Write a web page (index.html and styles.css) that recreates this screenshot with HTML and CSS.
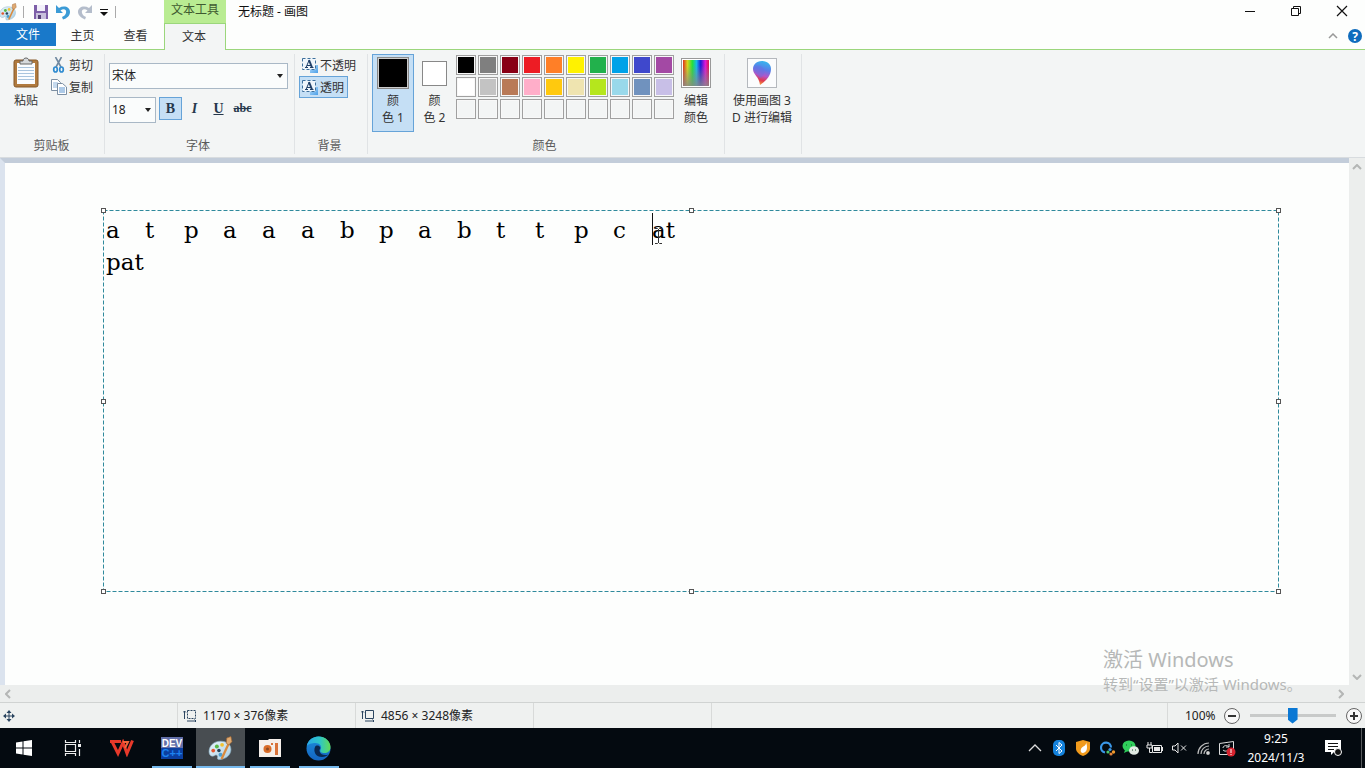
FILE: index.html
```html
<!DOCTYPE html>
<html lang="zh-CN">
<head>
<meta charset="utf-8">
<title>无标题 - 画图</title>
<link rel="stylesheet" href="styles.css">
</head>
<body>
<svg class="defs" aria-hidden="true">
  <defs>
    <linearGradient id="palBody" x1="0" y1="0" x2="1" y2="1"><stop offset="0" stop-color="#e8f4fa"/><stop offset="1" stop-color="#a9cfe4"/></linearGradient>
    <linearGradient id="blueSq" x1="0" y1="0" x2="1" y2="1"><stop offset="0" stop-color="#b5dcfb"/><stop offset="1" stop-color="#4a9fe8"/></linearGradient>
    <linearGradient id="rainbow"><stop offset="0" stop-color="#e0301e"/><stop offset=".17" stop-color="#d8d31c"/><stop offset=".36" stop-color="#23e03c"/><stop offset=".52" stop-color="#16b8e8"/><stop offset=".68" stop-color="#2018d8"/><stop offset=".86" stop-color="#e017d8"/><stop offset="1" stop-color="#d81848"/></linearGradient>
    <linearGradient id="greyFade" x1="0" y1="0" x2="0" y2="1"><stop offset=".2" stop-color="#888" stop-opacity="0"/><stop offset="1" stop-color="#888" stop-opacity=".85"/></linearGradient>
    <linearGradient id="drop" x1=".6" y1="0" x2=".4" y2="1"><stop offset="0" stop-color="#35b6ee"/><stop offset=".35" stop-color="#5b7be8"/><stop offset=".6" stop-color="#b455c8"/><stop offset=".8" stop-color="#e0394f"/><stop offset="1" stop-color="#f5a03a"/></linearGradient>
    <linearGradient id="edgeA" x1="0" y1="0" x2="1" y2="0"><stop offset="0" stop-color="#2aa8e8"/><stop offset=".55" stop-color="#2ec6c8"/><stop offset="1" stop-color="#62dc55"/></linearGradient>
    <linearGradient id="edgeB" x1="0" y1="0" x2="0" y2="1"><stop offset="0" stop-color="#1c8edc"/><stop offset="1" stop-color="#1464c0"/></linearGradient>
    <symbol id="palette" viewBox="0 0 24 24">
      <path d="M12 5C5 5 1 10 1 15c0 4 3 5 5 4 2-2 4 0 3 2 0 2 2 2 5 1 5-1 8-5 8-9 0-5-4-8-10-8z" fill="url(#palBody)" stroke="#8db4c8" stroke-width=".6"/>
      <circle cx="5" cy="14" r="1.800" fill="#e4572e"/><circle cx="8.500" cy="10" r="1.900" fill="#58b947"/><circle cx="13.500" cy="8.500" r="1.800" fill="#f2c230"/><circle cx="12" cy="18" r="1.900" fill="#4c9fd0"/><circle cx="10.500" cy="14" r="1.700" fill="#24435a"/>
      <path d="M20 7L13 22" stroke="#d98a3c" stroke-width="2.200"/><path d="M18 2l4-1.500 1 5-3 3-2.500-1.500z" fill="#dfaa72" stroke="#a06530" stroke-width=".6"/>
    </symbol>
    <symbol id="bgA" viewBox="0 0 16 16">
      <rect x="8" y="8" width="8" height="8" fill="url(#blueSq)"/>
      <rect x=".5" y="1.500" width="13" height="11" fill="#eef5fb" stroke="#3d6f9c" stroke-dasharray="3 2"/>
      <path d="M4 10.500L7 3.500M5 8.500h4M3 10.500h3M8 10.500h3.500" fill="none" stroke="#1f3f68"/>
      <path d="M7 3l3 7.500" stroke="#1f3f68" stroke-width="2"/>
    </symbol>
  </defs>
</svg>

<header class="titlebar">
  <div class="quick">
    <svg width="18" height="18"><use href="#palette"/></svg>
    <i class="bar"></i>
    <button class="ico" aria-label="保存"><svg width="16" height="16" viewBox="0 0 16 16"><path d="M1 1h14v14H1z" fill="#7d5fa8"/><path d="M4 1h8v6H4z" fill="#f2f0fa"/><path d="M3 9h10v6H3z" fill="#c8c0dc"/><path d="M5 11h3v4H5z" fill="#554278"/></svg></button>
    <button class="ico" aria-label="撤消"><svg width="16" height="16" viewBox="0 0 16 16"><path d="M1 1v8h7L5.500 6.500C9 4 12 6 11 9c-.5 2-2 3-4 4l1 2.500c4-1 7-4 7-7.500 0-5-6-7-11-4z" fill="#3b9bd6"/></svg></button>
    <button class="ico" aria-label="重做"><svg width="16" height="16" viewBox="0 0 16 16"><path d="M15 1v8H8l2.500-2.500C7 4 4 6 5 9c.5 2 2 3 4 4l-1 2.500C4 14 1 11 1 8c0-5 6-7 11-4z" fill="#b4bdcb"/></svg></button>
    <button class="ico menu" aria-label="自定义"><svg width="8" height="8" viewBox="0 0 8 8"><path d="M0 1.500h8" stroke="#111"/><path d="M0 4h8L4 8z" fill="#111"/></svg></button>
    <i class="bar"></i>
  </div>
  <div class="tooltab">文本工具</div>
  <h1 class="caption">无标题 - 画图</h1>
  <div class="winbtns">
    <button aria-label="最小化"><svg width="12" height="12"><path d="M1 6.500h10" stroke="#111"/></svg></button>
    <button aria-label="还原"><svg width="12" height="12" fill="none" stroke="#111"><path d="M1.500 3.500h7v7h-7zM3.500 3.500v-2h7v7h-2"/></svg></button>
    <button aria-label="关闭"><svg width="12" height="12"><path d="M1 1l10 10M11 1L1 11" stroke="#111" stroke-width="1.200"/></svg></button>
  </div>
</header>

<nav class="tabs">
  <button class="file">文件</button>
  <button>主页</button>
  <button>查看</button>
  <button class="current">文本</button>
  <div class="tabend">
    <button class="ico" aria-label="折叠功能区"><svg width="10" height="6"><path d="M1 5l4-4 4 4" fill="none" stroke="#999" stroke-width="1.500"/></svg></button>
    <button class="help" aria-label="帮助">?</button>
  </div>
</nav>

<section class="ribbon">
  <div class="group clip">
    <div class="body">
      <button class="big paste"><svg width="28" height="32" viewBox="0 0 28 32"><rect x="2" y="3" width="24" height="27" rx="2" fill="#b07a3f" stroke="#86592b"/><path d="M5 6h18v21H5z" fill="#fafcff"/><path d="M6 10.500h16M6 13.500h16M6 16.500h16M6 19.500h16M6 22.500h16" stroke="#a9c4de"/><path d="M8 7V4h3c0-4 6-4 6 0h3v3z" fill="#d6d9dc" stroke="#666"/></svg><span>粘贴</span></button>
      <div class="stack">
        <button class="row"><svg width="16" height="16" viewBox="0 0 16 16"><path d="M4.500 0l5.500 10M10.500 0L5 10" stroke="#7189a0" stroke-width="1.600"/><g fill="none" stroke="#2f8bd0" stroke-width="1.700"><ellipse cx="4.500" cy="12.500" rx="1.800" ry="2.500"/><ellipse cx="10.500" cy="12.500" rx="1.800" ry="2.500"/></g></svg>剪切</button>
        <button class="row"><svg width="16" height="16" viewBox="0 0 16 16" fill="#fff" stroke="#7c8fa3"><path d="M.5.5h6l3 3v8h-9z"/><path d="M2 4h5M2 6h5M2 8h5" stroke="#8cb4dc"/><path d="M6.500 4.500h5l4 3.500v7.500h-9z"/><path d="M8 9h6M8 11h6M8 13h6" stroke="#5b94cf"/></svg>复制</button>
      </div>
    </div>
    <h2>剪贴板</h2>
  </div>
  <div class="group font">
    <div class="body">
      <select class="face" aria-label="字体"><option>宋体</option></select>
      <div class="line">
        <select class="size" aria-label="字号"><option>18</option></select>
        <button class="fmt on"><b>B</b></button>
        <button class="fmt"><em>I</em></button>
        <button class="fmt"><u>U</u></button>
        <button class="fmt"><s>abc</s></button>
      </div>
    </div>
    <h2>字体</h2>
  </div>
  <div class="group back">
    <div class="body">
      <button class="row"><svg width="16" height="16"><use href="#bgA"/></svg>不透明</button>
      <button class="row on"><svg width="16" height="16"><use href="#bgA"/></svg>透明</button>
    </div>
    <h2>背景</h2>
  </div>
  <div class="group colours">
    <div class="body">
      <button class="big c1 on"><i class="chip black"></i><span>颜<br>色 1</span></button>
      <button class="big c2"><i class="chip white"></i><span>颜<br>色 2</span></button>
      <div class="swatches">
        <button style="background-color:#000" aria-label="黑色"></button><button style="background-color:#7f7f7f" aria-label="灰色"></button><button style="background-color:#880015" aria-label="深红"></button><button style="background-color:#ed1c24" aria-label="红色"></button><button style="background-color:#ff7f27" aria-label="橙色"></button><button style="background-color:#fff200" aria-label="黄色"></button><button style="background-color:#22b14c" aria-label="绿色"></button><button style="background-color:#00a2e8" aria-label="青色"></button><button style="background-color:#3f48cc" aria-label="靛蓝"></button><button style="background-color:#a349a4" aria-label="紫色"></button>
        <button style="background-color:#fff" aria-label="白色"></button><button style="background-color:#c3c3c3" aria-label="浅灰"></button><button style="background-color:#b97a57" aria-label="褐色"></button><button style="background-color:#ffaec9" aria-label="玫瑰色"></button><button style="background-color:#ffc90e" aria-label="金色"></button><button style="background-color:#efe4b0" aria-label="浅黄"></button><button style="background-color:#b5e61d" aria-label="酸橙色"></button><button style="background-color:#99d9ea" aria-label="淡青"></button><button style="background-color:#7092be" aria-label="蓝灰"></button><button style="background-color:#c8bfe7" aria-label="淡紫"></button>
        <button aria-label="空"></button><button aria-label="空"></button><button aria-label="空"></button><button aria-label="空"></button><button aria-label="空"></button><button aria-label="空"></button><button aria-label="空"></button><button aria-label="空"></button><button aria-label="空"></button><button aria-label="空"></button>
      </div>
      <button class="big edit"><svg width="30" height="30" viewBox="0 0 30 30"><rect x=".5" y=".5" width="29" height="29" fill="#fff" stroke="#999"/><path d="M2 2h26v26H2z" fill="url(#rainbow)"/><path d="M2 2h26v26H2z" fill="url(#greyFade)"/></svg><span>编辑<br>颜色</span></button>
    </div>
    <h2>颜色</h2>
  </div>
  <div class="group p3d">
    <div class="body">
      <button class="big"><svg width="30" height="30" viewBox="0 0 30 30"><rect x=".5" y=".5" width="29" height="29" fill="#fbfcfd" stroke="#b4b8bd"/><path d="M15 3c-6 0-9 4-9 8 0 6 6 7 7 16 5-3 11-9 11-16 0-4-3-8-9-8z" fill="url(#drop)"/><path d="M7 9c4-3 9-1 10 3s-2 8-4 8c-2-4-7-6-6-11z" fill="#6b6ee0" opacity=".45"/></svg><span>使用画图 3<br>D 进行编辑</span></button>
    </div>
  </div>
</section>

<main class="work">
  <div class="view">
    <div class="canvas">
      <div class="textbox">
        <svg class="frame" width="100%" height="100%"><rect x=".5" y=".5" width="100%" height="100%"/></svg>
        <textarea aria-label="文本" spellcheck="false">a	t	p	a	a	a	b	p	a	b	t	t	p	c	at
pat</textarea>
        <i class="caret"></i>
        <svg class="ibeam" width="9" height="16" viewBox="0 0 9 16"><path d="M1 .5h2.500l1 1 1-1H8M4.500 1v14M1 15.500h2.500l1-1 1 1H8" fill="none" stroke="#333"/></svg>
        <i class="h nw"></i><i class="h n"></i><i class="h ne"></i><i class="h w"></i><i class="h e"></i><i class="h sw"></i><i class="h s"></i><i class="h se"></i>
      </div>
    </div>
    <div class="vscroll">
      <svg width="10" height="6"><path d="M1 5l4-4 4 4"/></svg>
      <svg width="10" height="6"><path d="M1 1l4 4 4-4"/></svg>
    </div>
  </div>
  <div class="hscroll">
    <svg width="6" height="10"><path d="M5 1L1 5l4 4"/></svg>
    <svg width="6" height="10"><path d="M1 1l4 4-4 4"/></svg>
  </div>
  <aside class="watermark"><p class="big1">激活 Windows</p><p>转到“设置”以激活 Windows。</p></aside>
</main>

<footer class="status">
  <div class="cell pos"><svg width="12" height="12" viewBox="0 0 12 12"><path d="M6 1v10M1 6h10" stroke="#2b4560"/><path d="M6 0l2.500 3h-5zM6 12l2.500-3h-5zM0 6l3-2.500v5zM12 6L9 3.500v5z" fill="#2b4560"/></svg></div>
  <div class="cell"><svg width="14" height="12" viewBox="0 0 14 12" fill="none" stroke="#2b4560"><path d="M4.500 .5h8v8h-8z" stroke-dasharray="2 1"/><path d="M1.500 9V1M0 2.500L1.500 1 3 2.500M4 11h9M11.500 9.500L13 11l-1.500 1.500"/></svg>1170 × 376像素</div>
  <div class="cell"><svg width="14" height="12" viewBox="0 0 14 12" fill="none" stroke="#2b4560"><path d="M4.500 .5h8v8h-8z"/><path d="M1.500 9V1M0 2.500L1.500 1 3 2.500M4 11h9M11.500 9.500L13 11l-1.500 1.500"/></svg>4856 × 3248像素</div>
  <div class="cell"></div>
  <div class="zoom">
    <label for="zoom">100%</label>
    <button aria-label="缩小"><svg width="18" height="18"><circle cx="9" cy="9" r="7.500" fill="#f8f8f8" stroke="#666"/><path d="M5 9h8" stroke="#333" stroke-width="2"/></svg></button>
    <input id="zoom" type="range" min="0" max="100" value="50">
    <button aria-label="放大"><svg width="18" height="18"><circle cx="9" cy="9" r="7.500" fill="#f8f8f8" stroke="#666"/><path d="M5 9h8M9 5v8" stroke="#333" stroke-width="2"/></svg></button>
  </div>
</footer>

<div class="taskbar">
  <button aria-label="开始"><svg width="18" height="18" viewBox="0 0 18 18" fill="#fff"><path d="M1 3.500l6.500-1v6H1zM8.500 2.300L17 1v7.500H8.500zM1 9.500h6.500v6L1 14.500zM8.500 9.500H17V17l-8.500-1.300z"/></svg></button>
  <button aria-label="任务视图"><svg width="18" height="16" viewBox="0 0 18 16" fill="none" stroke="#eee"><path d="M1.500 4.500h10v7h-10zM1.500 0v2.500h10V0M1.500 16v-2.500h10V16M15.500 0v3M15.500 9v7" stroke-width="1.200"/><path d="M14 4h3v3h-3z" fill="#eee" stroke="none"/></svg></button>
  <button aria-label="WPS"><svg width="24" height="18" viewBox="0 0 24 18" fill="none" stroke="#e8392a" stroke-width="3"><path d="M0 2.500h11M2 2.500l6 12 5-11 4 11 5.500-13"/><path d="M13 3h5l-3 6" stroke="#f2643a" stroke-width="2"/></svg></button>
  <button class="run" aria-label="DEV C++"><svg width="24" height="24" viewBox="0 0 24 24"><path d="M1 1h22v11H1z" fill="#626fa8"/><path d="M1 12h22v11H1z" fill="#0b3fa0"/><g font-family="Liberation Sans" font-weight="bold" text-anchor="middle"><text x="12" y="11" font-size="10" fill="#fff">DEV</text><text x="12" y="21" font-size="11" fill="#1d83f0">C++</text></g></svg></button>
  <button class="run active" aria-label="画图"><svg width="25" height="25"><use href="#palette"/></svg></button>
  <button class="run" aria-label="录屏"><svg width="22" height="20" viewBox="0 0 22 20"><path d="M0 2h9l1-1h12v18H0z" fill="#f5efea"/><circle cx="8.500" cy="11" r="4" fill="#d96c28"/><circle cx="8.500" cy="11" r="1.500" fill="#8e4a20"/><path d="M16 5h3v12h-3z" fill="#d9733a"/><path d="M12 5h2v2h-2z" fill="#d9733a"/></svg></button>
  <button class="run" aria-label="Edge"><svg width="25" height="25" viewBox="0 0 25 25"><circle cx="12.500" cy="12.500" r="12" fill="url(#edgeB)"/><path d="M.8 10C2 4 7 .5 12.500.5c7 0 12 5 12 10.500 0 4-3 6-6 6-3 0-5-1-4-3 2-4-1-7-5-7C6 7 2 8 .8 10z" fill="url(#edgeA)"/><path d="M9 11c-2 5 1 10 7 10 3 0 5-1 6.500-2.500-3 1-8 1-9-3.500-.3-1.500 1-2 .8-3.500C13 9 10 9 9 11z" fill="#0a2850"/></svg></button>
  <div class="tray">
    <button aria-label="显示隐藏的图标"><svg width="14" height="10"><path d="M1 8l6-6 6 6" fill="none" stroke="#ddd" stroke-width="1.300"/></svg></button>
    <button aria-label="蓝牙"><svg width="14" height="16"><rect x="1" width="12" height="16" rx="5" fill="#1482dc"/><path d="M4 5l6 6-3 2.500v-11L10 5l-6 6" fill="none" stroke="#fff"/></svg></button>
    <button aria-label="安全"><svg width="16" height="16"><path d="M1 2l7-2 7 2v7c0 3-4 6-7 7-3-1-7-4-7-7z" fill="#f09a1c"/><path d="M11 2c1 4-4 4-5 7-1 2 0 4 2 4 4-1 5-5 3-11z" fill="#fff"/></svg></button>
    <button aria-label="同步"><svg width="17" height="16"><path d="M6 12.500A5 5 0 1 1 12 7.500" fill="none" stroke="#3a97e8" stroke-width="2.200"/><circle cx="11" cy="9.500" r="1.600" fill="#3a97e8"/><circle cx="14.500" cy="12" r="1.700" fill="#f09a2c"/><circle cx="12" cy="14" r="1.600" fill="#e5843c"/><circle cx="9" cy="12" r="1.600" fill="#4cc56a"/></svg></button>
    <button aria-label="微信"><svg width="18" height="16"><ellipse cx="7" cy="6" rx="6.500" ry="5.500" fill="#2fce5b"/><path d="M3 10l-1 3 4-2z" fill="#2fce5b"/><ellipse cx="12" cy="10.500" rx="5" ry="4.300" fill="#e1ebe4"/><path d="M4 5h1M9 5h1M10 10h1M13 10h1" stroke="#174c28"/></svg></button>
    <button aria-label="电池"><svg width="18" height="14" fill="none" stroke="#e8e8e8"><path d="M6.500 4.500h9v7h-9zM2 1v3M5 1v3M1 4h5v3H1zM3.500 7v4.500H6"/><path d="M8 6h6v4H8zM16 6h1v4h-1z" fill="#e8e8e8" stroke="none"/></svg></button>
    <button aria-label="静音"><svg width="16" height="14" fill="none" stroke="#e8e8e8"><path d="M1.500 5h2.500l3-3v10l-3-3H1.500zM10 4.500l5 5M15 4.500l-5 5"/></svg></button>
    <button aria-label="网络"><svg width="16" height="16" fill="none" stroke="#bbb" stroke-width="1.200"><path d="M3 14A11 11 0 0 1 14 3M6 14a8 8 0 0 1 8-8M9 14a5 5 0 0 1 5-5"/><circle cx="13" cy="13" r="1.300" fill="#fff"/></svg></button>
    <button aria-label="更新"><svg width="18" height="17" fill="none" stroke="#ddd"><path d="M1.500 3.500l14-2v13h-14zM5 8c0-3 5-3 6-1M11 4v3H8M10 10c-2 2-4 1-5 0"/><circle cx="13" cy="12" r="4.500" fill="#d8232f" stroke="none"/><path d="M13 9v4M13 14v1" stroke="#fff"/></svg></button>
  </div>
  <div class="clock"><span>9:25</span><span>2024/11/3</span></div>
  <button class="note" aria-label="通知"><svg width="18" height="18"><path d="M1 1h16v12h-7l-3 3v-3H1z" fill="#fff"/><path d="M4 4.500h10M4 7.500h10M4 10.500h6" stroke="#111"/><circle cx="14" cy="13" r="3.500" fill="#111" stroke="#fff"/></svg></button>
  <i class="peek"></i>
</div>
</body>
</html>
```

FILE: styles.css
```css
* { box-sizing: border-box; }
body {
  margin: 0; height: 100vh; display: flex; flex-direction: column; overflow: hidden;
  font: 12px/17px "Noto Sans", "Noto Sans CJK SC", sans-serif; color: #333; background: #fdfefd;
}
button { font: inherit; color: inherit; background: none; border: 0; padding: 0; display: flex; align-items: center; justify-content: center; }
svg { display: block; flex: none; }
h1, h2, p { margin: 0; font-size: 12px; font-weight: normal; }
.defs { position: absolute; width: 0; height: 0; }

.titlebar { display: flex; height: 23px; align-items: stretch; color: #111; }
.quick { display: flex; align-items: center; width: 164px; gap: 6px; }
.quick > svg { margin-left: -1px; }
.quick .bar { width: 1px; height: 12px; background: #aaa; }
.quick .bar:nth-child(2) { margin-right: 3px; }
.quick .menu { width: 10px; }
.tooltab { width: 62px; text-align: center; background: #b9ec92; color: #3f5a30; line-height: 20px; }
.caption { margin-left: 12px; line-height: 23px; }
.winbtns { margin-left: auto; display: flex; }
.winbtns button { width: 46px; height: 21px; }

.tabs { display: flex; height: 27px; border-bottom: 1px solid #9bd67c; }
.tabs > button { width: 53px; height: 24px; }
.tabs .file { width: 56px; height: 23px; background: #1979ca; color: #fff; }
.tabs .current { width: 62px; height: 27px; padding: 0 2px 2px 0; background: #f3f5f5; border: solid #9bd67c; border-width: 1px 1px 0; margin-left: 2px; }
.tabend { margin-left: auto; display: flex; align-items: center; gap: 10px; padding-right: 3px; }
.help { width: 14px; height: 14px; border-radius: 50%; background: #0f6cbd; color: #fff; font-weight: bold; }

.ribbon { display: flex; height: 108px; padding-top: 4px; background: #f3f5f5; border-bottom: 1px solid #d8dcdf; }
.group { display: flex; flex-direction: column; height: 100px; border-right: 1px solid #e0e3e5; }
.group .body { flex: 1; display: flex; }
.group h2 { text-align: center; color: #5a5a5a; line-height: 17px; padding-right: 3px; }
.big { flex-direction: column; justify-content: flex-start; }
.row { gap: 2px; height: 22px; border: 1px solid transparent; justify-content: flex-start; }
.on { background: #c5dff5; border: 1px solid #66a3d8; }
.clip { width: 105px; }
.clip h2 { padding-right: 1px; }
.paste { width: 50px; padding: 3px 0 0 2px; gap: 3px; }
.clip .row { width: 52px; }
.font { width: 190px; }
.font .body { flex-direction: column; padding: 9px 6px 0 4px; gap: 8px; }
select {
  appearance: none; font: inherit; color: #222; height: 26px; border: 1px solid #a9b8c6; border-radius: 0; padding: 0 3px 2px 2px;
  background: #fafcfc url("data:image/svg+xml,%3Csvg xmlns='http://www.w3.org/2000/svg' width='6' height='4'%3E%3Cpath d='M0 0h6L3 4z' fill='%23222'/%3E%3C/svg%3E") right 4px center no-repeat;
}
.line { display: flex; gap: 1px; }
.size { width: 47px; margin-right: 2px; }
.fmt { width: 23px; height: 23px; font: bold 14px "Liberation Serif", serif; color: #26384c; }
.fmt s { font-size: 12px; font-weight: bold; }
.back { width: 73px; }
.back .body { flex-direction: column; padding-left: 4px; align-items: flex-start; }
.back .row { padding: 0 3px 0 2px; }
.colours { width: 357px; }
.colours .body { padding-left: 4px; align-items: flex-start; }
.c1 { width: 42px; height: 78px; padding-top: 2px; gap: 3px; }
.c2 { width: 41px; height: 78px; padding-top: 7px; gap: 6px; }
.chip { border: 1px solid #888; }
.black { width: 32px; height: 32px; background: #000; box-shadow: inset 0 0 0 1px #ccc; }
.white { width: 25px; height: 25px; background: #fff; }
.swatches { display: grid; grid-template-columns: repeat(10, 20px); grid-auto-rows: 20px; gap: 2px; margin: 1px 7px 0 1px; }
.swatches button { border: 1px solid #a0a0a0; padding: 1px; background-clip: content-box; box-shadow: inset 0 0 0 1px #f8f8f8; }
.edit { padding-top: 4px; gap: 4px; }
.p3d { width: 77px; }
.p3d .big { width: 74px; padding-top: 4px; gap: 4px; white-space: nowrap; }

.work { flex: 1; min-height: 0; display: flex; flex-direction: column; position: relative; background: #eceeed; }
.view { flex: 1; display: flex; min-height: 0; }
.canvas { flex: 1; border-top: 5px solid #c3cdda; border-left: 5px solid #dbe3ee; background: #fdfefd; position: relative; }
.vscroll { width: 16px; display: flex; flex-direction: column; justify-content: space-between; align-items: center; padding: 6px 0 5px; }
.hscroll { height: 17px; display: flex; align-items: center; justify-content: space-between; padding: 0 21px 0 5px; }
.vscroll path, .hscroll path { fill: none; stroke: #b4b6b5; stroke-width: 2; }
.textbox { position: absolute; left: 98px; right: 71px; top: 47px; bottom: 94px; }
.frame { position: absolute; inset: 0; overflow: visible; }
.frame rect { fill: none; stroke: #2f8a9c; stroke-dasharray: 4 2; }
textarea {
  position: absolute; inset: 4px 1px 1px; width: calc(100% - 2px); height: calc(100% - 5px); border: 0; outline: 0; resize: none; padding: 0 2px; background: none;
  font: 23px/32px "DejaVu Serif", serif; color: #000; tab-size: 39px; overflow: hidden;
}
.caret { position: absolute; left: 549px; top: 3px; width: 1px; height: 32px; background: #111; }
.ibeam { position: absolute; left: 551px; top: 18px; }
.h { position: absolute; width: 5px; height: 5px; border: 1px solid #555; background: #fff; }
.nw, .w, .sw { left: -2px; }
.n, .s { left: calc(50% - 2px); }
.ne, .e, .se { right: -3px; }
.nw, .n, .ne { top: -2px; }
.w, .e { top: calc(50% - 2px); }
.sw, .s, .se { bottom: -3px; }
.watermark { position: absolute; right: 62px; bottom: 7px; width: 200px; color: #b6b8b7; pointer-events: none; white-space: nowrap; }
.watermark p { font-size: 15px; line-height: 22px; }
.watermark .big1 { font-size: 20px; line-height: 26px; }

.status { display: flex; height: 26px; background: #eff1f0; border-top: 1px solid #d0d3d2; color: #222; }
.cell { width: 178px; display: flex; align-items: center; gap: 6px; padding-left: 5px; border-right: 1px solid #d8dad9; }
.pos { padding-left: 3px; }
.zoom { margin-left: auto; display: flex; align-items: center; gap: 7px; width: 198px; padding-left: 17px; border-left: 1px solid #d8dad9; }
.zoom input { appearance: none; width: 86px; height: 20px; margin: 0 2px; background: linear-gradient(#c8cac9, #c8cac9) center / 100% 3px no-repeat; }
.zoom input::-webkit-slider-thumb { appearance: none; width: 10px; height: 16px; background: #0a78d4; clip-path: polygon(0 0, 100% 0, 100% 75%, 50% 100%, 0 75%); }

.taskbar { display: flex; height: 40px; background: #040a10; color: #fff; }
.taskbar > button { width: 49px; }
.taskbar > button:nth-child(-n+3) { padding-right: 2px; }
.run { background: linear-gradient(#76b9ed, #76b9ed) center bottom / 40px 2px no-repeat; }
.active { background: linear-gradient(#76b9ed, #76b9ed) center bottom / 100% 2px no-repeat, #484d51; }
.tray { margin-left: auto; display: flex; }
.tray button { width: 24px; }
.clock { width: 74px; display: flex; flex-direction: column; align-items: center; justify-content: center; line-height: 19px; }
.taskbar .note { width: 40px; }
.peek { width: 4px; margin-left: 8px; border-left: 1px solid #56595c; }
```
